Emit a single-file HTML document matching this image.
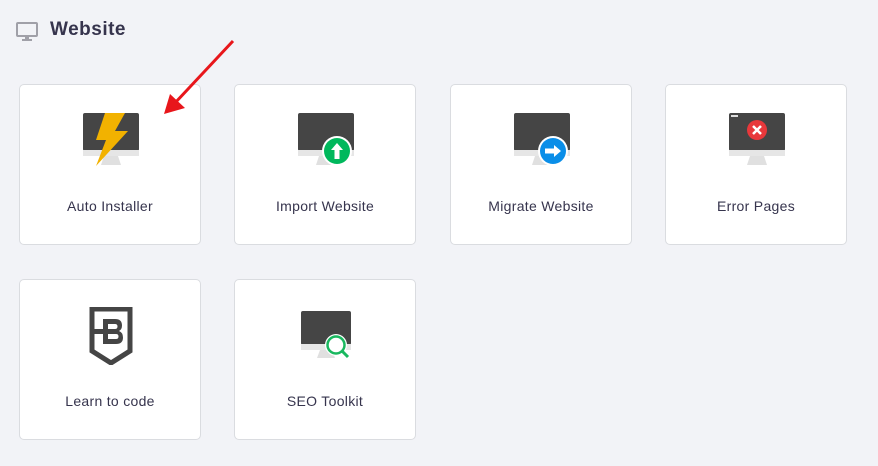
<!DOCTYPE html>
<html><head><style>
body{margin:0;width:878px;height:466px;background:#f2f3f7;font-family:"Liberation Sans",sans-serif;position:relative;overflow:hidden}
.h{position:absolute;left:16px;top:19px;font-size:19px;font-weight:bold;color:#36344d}
.h svg{position:absolute;left:0;top:3px}
.h span{position:absolute;left:34px;top:0;white-space:nowrap;letter-spacing:0.5px}
.c{position:absolute;width:182px;height:161px;background:#fff;border:1px solid #dadce0;border-radius:5px;box-sizing:border-box}
.c .t{position:absolute;left:0;right:0;text-align:center;top:113px;font-size:14px;letter-spacing:0.3px;color:#36344d}
.c svg{position:absolute;left:62px;top:27px}
.arrow{position:absolute;left:160px;top:38px;z-index:5}
</style></head><body>
<div class="h"><svg width="22" height="20" viewBox="0 0 22 20"><rect x="1" y="1" width="20" height="13" rx="1" fill="none" stroke="#a0a0a8" stroke-width="2"/><rect x="9" y="14" width="4" height="3" fill="#a0a0a8"/><rect x="6" y="17" width="10" height="2" fill="#a0a0a8"/></svg><span>Website</span></div>

<div class="c" style="left:19px;top:84px"><svg width="58" height="56" viewBox="0 0 58 56"><rect x="1" y="1" width="56" height="38" rx="2" fill="#454545"/><rect x="1" y="38" width="56" height="6" fill="#e6e6e6"/><polygon points="22,44 36,44 39,53 19,53" fill="#e0e0e0"/><polygon points="23,1 43,1 33,19 46,19 14,54 24,28 14,28" fill="#f2b200"/></svg><div class="t">Auto Installer</div></div>

<div class="c" style="left:234px;top:84px"><svg width="58" height="56" viewBox="0 0 58 56"><rect x="1" y="1" width="56" height="38" rx="2" fill="#454545"/><rect x="1" y="38" width="56" height="6" fill="#e6e6e6"/><polygon points="22,44 36,44 39,53 19,53" fill="#e0e0e0"/><circle cx="40" cy="39" r="15" fill="#fff"/><circle cx="40" cy="39" r="13" fill="#00b85c"/><polygon points="40,31 46,38 42.5,38 42.5,47 37.5,47 37.5,38 34,38" fill="#fff"/></svg><div class="t">Import Website</div></div>

<div class="c" style="left:450px;top:84px"><svg width="58" height="56" viewBox="0 0 58 56"><rect x="1" y="1" width="56" height="38" rx="2" fill="#454545"/><rect x="1" y="38" width="56" height="6" fill="#e6e6e6"/><polygon points="22,44 36,44 39,53 19,53" fill="#e0e0e0"/><circle cx="40" cy="39" r="15" fill="#fff"/><circle cx="40" cy="39" r="13" fill="#0a8ee8"/><polygon points="48,39 41,33 41,36.5 32,36.5 32,41.5 41,41.5 41,45" fill="#fff"/></svg><div class="t">Migrate Website</div></div>

<div class="c" style="left:665px;top:84px"><svg width="58" height="56" viewBox="0 0 58 56"><rect x="1" y="1" width="56" height="38" rx="2" fill="#454545"/><rect x="1" y="38" width="56" height="6" fill="#e6e6e6"/><polygon points="22,44 36,44 39,53 19,53" fill="#e0e0e0"/><rect x="3" y="3" width="7" height="2" fill="#ddd"/><circle cx="29" cy="18" r="10" fill="#e8383b"/><path d="M25 14 L33 22 M33 14 L25 22" stroke="#fff" stroke-width="2.5"/></svg><div class="t">Error Pages</div></div>

<div class="c" style="left:19px;top:279px"><svg width="58" height="58" viewBox="0 0 58 58"><path d="M10 2 H48 V44 L29 56 L10 44 Z" fill="none" stroke="#454545" stroke-width="5"/><path d="M21 12 V37 H34 Q41 37 41 30.5 Q41 25.5 37 24 Q40 22.5 40 18.5 Q40 12 33 12 Z M26 17 H33 Q35.5 17 35.5 19.5 Q35.5 22 33 22 H26 Z M26 27 H34 Q36.5 27 36.5 29.5 Q36.5 32 34 32 H26 Z" fill="#454545" fill-rule="evenodd"/><rect x="10" y="22" width="12" height="5" fill="#454545"/></svg><div class="t">Learn to code</div></div>

<div class="c" style="left:234px;top:279px"><svg width="58" height="56" viewBox="0 0 58 56"><rect x="4" y="4" width="50" height="34" rx="2" fill="#454545"/><rect x="4" y="37" width="50" height="6" fill="#e6e6e6"/><polygon points="23,43 35,43 38,51 20,51" fill="#e0e0e0"/><circle cx="39" cy="38" r="11" fill="#fff"/><circle cx="39" cy="38" r="8.5" fill="#fff" stroke="#19b85f" stroke-width="2.5"/><line x1="45" y1="44" x2="51" y2="50" stroke="#19b85f" stroke-width="3"/></svg><div class="t">SEO Toolkit</div></div>

<svg class="arrow" width="76" height="80"><line x1="73" y1="3" x2="14" y2="66" stroke="#e8161b" stroke-width="3"/><polygon points="4,76 10,56 25,70" fill="#e8161b"/></svg>
</body></html>
